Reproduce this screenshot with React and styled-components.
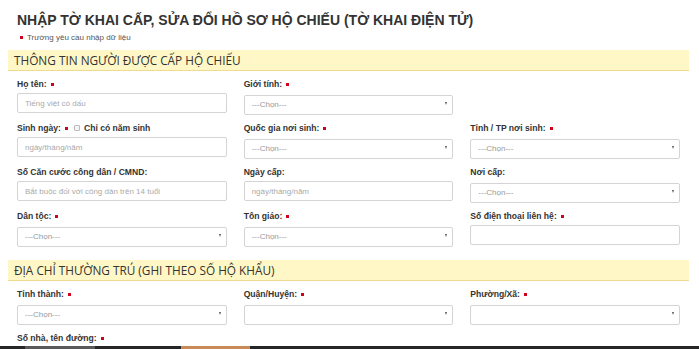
import React from 'react';
import styled, { createGlobalStyle } from 'styled-components';

const GlobalStyle = createGlobalStyle`
    html, body {
        margin: 0;
        padding: 0;
        background: #fff;
    }
    body {
        font-family: "Liberation Sans", Arial, sans-serif;
        color: #333;
    }
    * {
        box-sizing: border-box;
    }
`;

const Page = styled.div`
    padding: 0 10px 0 8px;
`;

const Header = styled.div`
    padding: 13px 9px 0;
    height: 50px;
`;

const Title = styled.h1`
    margin: 0;
    font-size: 14px;
    line-height: 14px;
    font-weight: bold;
    color: #333;
`;

const Note = styled.div`
    display: flex;
    align-items: center;
    margin-top: 6px;
    padding-left: 3px;
    font-size: 8px;
    color: #555;
`;

const Required = styled.span`
    display: inline-block;
    width: 3px;
    height: 3px;
    background: #d0021b;
    margin: 0 ${p => p.$after || 4}px 0 ${p => p.$before || 0}px;
`;

const Band = styled.div`
    height: 21px;
    padding-left: 6px;
    background: #fff8c6;
    border-bottom: 1px solid #efdb8f;
    display: flex;
    align-items: center;
    font-family: "Open Sans", sans-serif;
    font-size: 11.8px;
    color: #333;
`;

const Grid = styled.div`
    display: grid;
    grid-template-columns: repeat(3, 1fr);
    column-gap: 17px;
    row-gap: 9px;
    padding: 7px 9px ${p => p.$bottom || 15}px;
`;

const Field = styled.div`
    display: flex;
    flex-direction: column;
`;

const Label = styled.label`
    display: flex;
    align-items: center;
    height: 12px;
    margin-bottom: 3px;
    font-size: 8.6px;
    font-weight: bold;
    color: #333;
`;

const Check = styled.span`
    display: inline-block;
    width: 6px;
    height: 6px;
    border: 1px solid #bbb;
    border-radius: 1px;
    background: #f4f4f4;
    margin-right: 4px;
`;

const TextInput = styled.input`
    height: 20px;
    width: 100%;
    border: 1px solid #d4d4d4;
    border-radius: 2px;
    padding: 0 7px;
    font-family: "Liberation Sans", Arial, sans-serif;
    font-size: 8px;
    color: #555;
    outline: none;

    &::placeholder {
        color: #aaa;
    }
`;

const SelectBox = styled.div`
    position: relative;
    height: 20px;

    &::after {
        content: '';
        position: absolute;
        right: 6px;
        top: 9px;
        border-left: 1.5px solid transparent;
        border-right: 1.5px solid transparent;
        border-top: 3px solid #555;
    }
`;

const Select = styled.select`
    appearance: none;
    -webkit-appearance: none;
    width: 100%;
    height: 20px;
    border: 1px solid #d4d4d4;
    border-radius: 2px;
    padding: 0 7px;
    background: #fff;
    font-family: "Liberation Sans", Arial, sans-serif;
    font-size: 8px;
    color: #999;
    outline: none;
`;

const Empty = styled.div``;

const BottomBar = styled.div`
    position: fixed;
    left: 0;
    right: 0;
    bottom: 0;
    height: 3px;
    background: #262626;
    display: flex;
`;

const BarSegment = styled.span`
    margin-left: ${p => p.$offset}px;
    width: ${p => p.$width}px;
    background: ${p => p.$color};
`;

const Dropdown = ({ empty }) => (
    <SelectBox>
        <Select defaultValue="">
            <option value="">{empty ? '' : '---Chọn---'}</option>
        </Select>
    </SelectBox>
);

const LabelText = ({ text, required }) => (
    <Label>
        {text}
        {required && <Required $before={4} />}
    </Label>
);

const personFields = [
    { label: 'Họ tên:', required: true, type: 'text', placeholder: 'Tiếng việt có dấu' },
    { label: 'Giới tính:', required: true, type: 'select' },
    { type: 'empty' },
    { label: 'Sinh ngày:', required: true, type: 'text', placeholder: 'ngày/tháng/năm', birthYear: true },
    { label: 'Quốc gia nơi sinh:', required: true, type: 'select' },
    { label: 'Tỉnh / TP nơi sinh:', required: true, type: 'select' },
    { label: 'Số Căn cước công dân / CMND:', type: 'text', placeholder: 'Bắt buộc đối với công dân trên 14 tuổi' },
    { label: 'Ngày cấp:', type: 'text', placeholder: 'ngày/tháng/năm' },
    { label: 'Nơi cấp:', type: 'select' },
    { label: 'Dân tộc:', required: true, type: 'select' },
    { label: 'Tôn giáo:', required: true, type: 'select' },
    { label: 'Số điện thoại liên hệ:', required: true, type: 'text', placeholder: '' },
];

const addressFields = [
    { label: 'Tỉnh thành:', required: true, type: 'select' },
    { label: 'Quận/Huyện:', required: true, type: 'select', empty: true },
    { label: 'Phường/Xã:', required: true, type: 'select', empty: true },
    { label: 'Số nhà, tên đường:', required: true, type: 'label' },
];

const renderField = (f, i) => {
    if (f.type === 'empty') return <Empty key={i} />;
    return (
        <Field key={i}>
            {f.birthYear ? (
                <Label>
                    {f.label}
                    <Required $before={4} $after={6} />
                    <Check />
                    Chỉ có năm sinh
                </Label>
            ) : (
                <LabelText text={f.label} required={f.required} />
            )}
            {f.type === 'text' && <TextInput type="text" placeholder={f.placeholder} />}
            {f.type === 'select' && <Dropdown empty={f.empty} />}
        </Field>
    );
};

const App = () => (
    <>
        <GlobalStyle />
        <Page>
            <Header>
                <Title>NHẬP TỜ KHAI CẤP, SỬA ĐỔI HỒ SƠ HỘ CHIẾU (TỜ KHAI ĐIỆN TỬ)</Title>
                <Note>
                    <Required />
                    Trường yêu cầu nhập dữ liệu
                </Note>
            </Header>

            <Band>THÔNG TIN NGƯỜI ĐƯỢC CẤP HỘ CHIẾU</Band>
            <Grid>{personFields.map(renderField)}</Grid>

            <Band>ĐỊA CHỈ THƯỜNG TRÚ (GHI THEO SỐ HỘ KHẨU)</Band>
            <Grid $bottom={20}>{addressFields.map(renderField)}</Grid>
        </Page>
        <BottomBar>
            <BarSegment $offset={25} $width={70} $color="#5a5a5a" />
            <BarSegment $offset={86} $width={69} $color="#c98a5a" />
        </BottomBar>
    </>
);

export default App;
